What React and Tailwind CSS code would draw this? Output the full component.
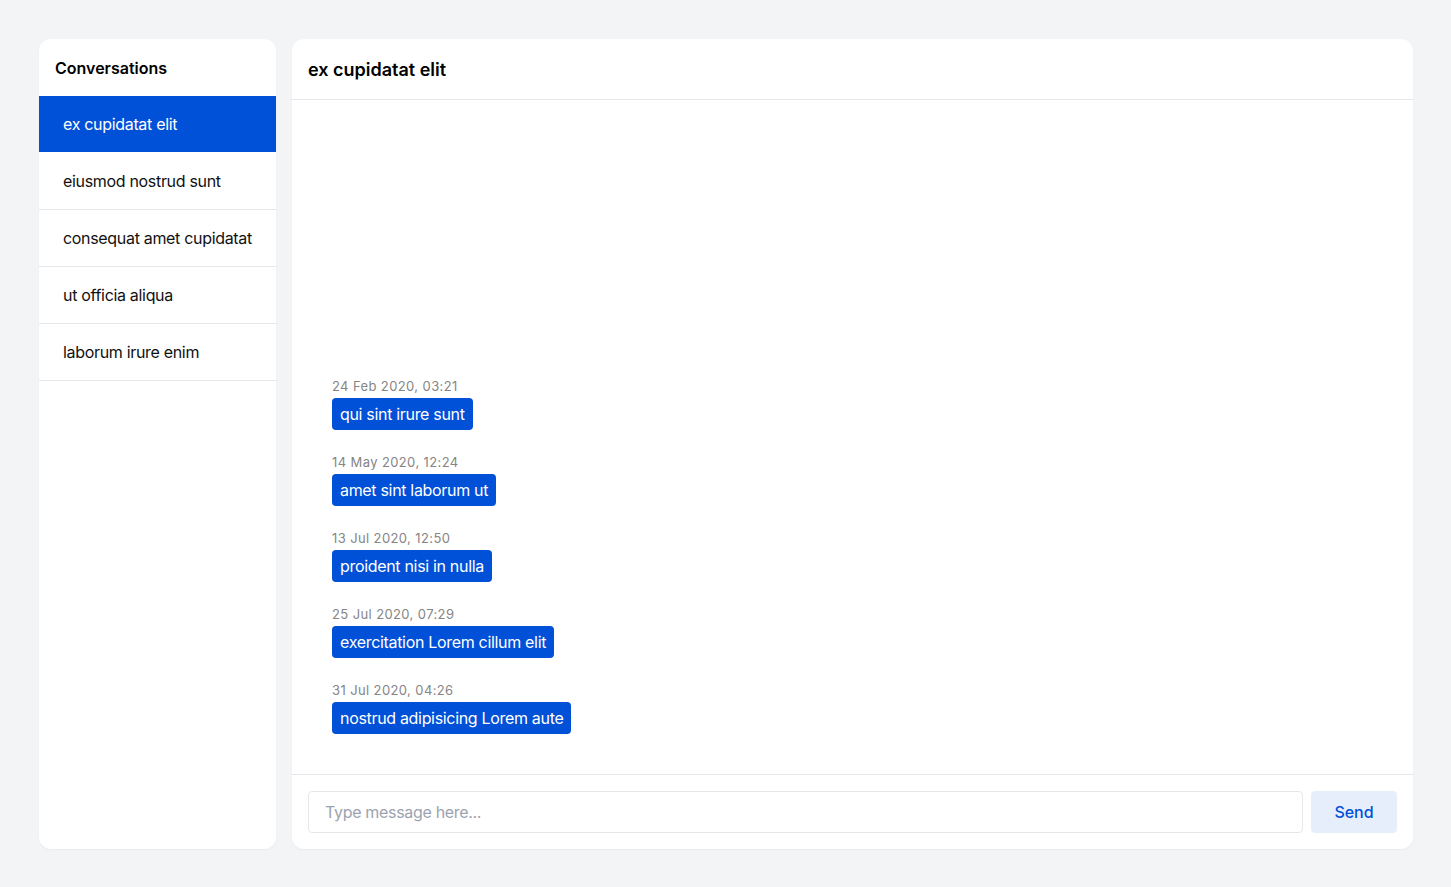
import React from "react";

const convs = [
  "ex cupidatat elit",
  "eiusmod nostrud sunt",
  "consequat amet cupidatat",
  "ut officia aliqua",
  "laborum irure enim",
];

const msgs = [
  ["24 Feb 2020, 03:21", "qui sint irure sunt"],
  ["14 May 2020, 12:24", "amet sint laborum ut"],
  ["13 Jul 2020, 12:50", "proident nisi in nulla"],
  ["25 Jul 2020, 07:29", "exercitation Lorem cillum elit"],
  ["31 Jul 2020, 04:26", "nostrud adipisicing Lorem aute"],
];

export default function App() {
  return (
    <div
      className="w-[1451px] h-[887px] bg-[#f3f4f6] pl-[39px] pr-[38px] pt-[39px] pb-[38px] flex gap-4"
      style={{ fontFamily: "Inter, 'Noto Sans', sans-serif" }}
    >
      <div className="w-[237px] bg-white rounded-xl shadow-[0_1px_2px_rgba(0,0,0,0.04)] overflow-hidden flex flex-col">
        <div className="h-[57px] flex items-center px-4 text-[16px] font-semibold text-black">
          Conversations
        </div>
        {convs.map((c, i) => (
          <div
            key={c}
            className={
              i === 0
                ? "h-[56px] flex items-center pl-6 text-[16px] tracking-[-0.02em] text-white bg-[#0050d8]"
                : i === 1
                ? "h-[58px] pt-px flex items-center pl-6 text-[16px] tracking-[-0.02em] text-[#111] border-b border-[#e5e7eb]"
                : "h-[57px] flex items-center pl-6 text-[16px] tracking-[-0.02em] text-[#111] border-b border-[#e5e7eb]"
            }
          >
            {c}
          </div>
        ))}
      </div>
      <div className="flex-1 bg-white rounded-xl shadow-[0_1px_2px_rgba(0,0,0,0.04)] flex flex-col overflow-hidden">
        <div className="h-[61px] flex items-center px-4 border-b border-[#e5e7eb] text-[18px] font-semibold text-black">
          ex cupidatat elit
        </div>
        <div className="flex-1 flex flex-col justify-end pl-10 pb-10">
          {msgs.map(([t, m], i) => (
            <div key={t} className={"flex flex-col items-start " + (i < msgs.length - 1 ? "mb-[25px]" : "")}>
              <div className="text-[13px] leading-[15px] mb-[4px] tracking-[0.03em] text-[#858585]">{t}</div>
              <div className="h-[32px] flex items-center px-2 rounded-[4px] bg-[#0050d8] text-white text-[16px] tracking-[-0.02em]">
                {m}
              </div>
            </div>
          ))}
        </div>
        <div className="border-t border-[#e5e7eb] p-4 flex gap-2">
          <input
            className="flex-1 h-[42px] border border-[#e5e7eb] rounded-[4px] px-4 text-[16px] tracking-[-0.02em] outline-none placeholder:text-[#9ca3af]"
            placeholder="Type message here..."
          />
          <button className="w-[86px] h-[42px] rounded-[4px] bg-[#e6eefb] text-[#0050d8] text-[16px] font-medium">
            Send
          </button>
        </div>
      </div>
    </div>
  );
}
